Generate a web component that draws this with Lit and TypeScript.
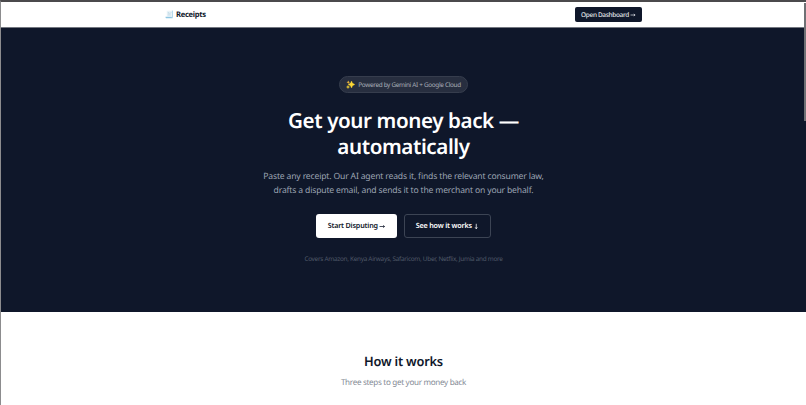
import { LitElement, css, html, svg } from 'lit';
import { customElement } from 'lit/decorators.js';

const receiptIcon = svg`
  <svg class="receipt" viewBox="0 0 18 18">
    <path d="M3.500 1l1.500 1 1.500-1L8 2l1.500-1L11 2l1.500-1L14 2l2-1v12H3.500z" fill="#e9f3f8" />
    <path d="M14 1.500l2-.5v13.500a2 2 0 0 1-2 2z" fill="#b5d9eb" />
    <path d="M1 13.500h12.500c0 1.500.5 2.500 1.500 3H3c-1.200 0-2-1-2-3z" fill="#8fc6e2" />
    <path d="M5.500 5h3M5.500 7.500h6M5.500 10h6M11 5h2" stroke="#aacbdc" stroke-width="1" />
  </svg>
`;

const sparklesIcon = svg`
  <svg class="sparkles" viewBox="0 0 18 18">
    <path d="M11 2q.8 6 6.500 7-5.700 1-6.500 7-.8-6-6.500-7 5.700-1 6.500-7z" fill="#fdd835" stroke="#fdd835" stroke-width=".8" />
    <path d="M4.500 1q.4 3 3.500 3.500-3.100.5-3.500 3.500-.4-3-3.500-3.500 3.100-.5 3.500-3.500z" fill="#f6b93a" />
    <path d="M4 11q.4 2.600 3 3-2.600.4-3 3-.4-2.600-3-3 2.600-.4 3-3z" fill="#fdd835" stroke="#fdd835" stroke-width=".8" />
  </svg>
`;

const arrowRight = svg`
  <svg class="arrow" viewBox="0 0 12 12">
    <path d="M1 6h9M7.500 4L10.300 6 7.500 8" fill="none" stroke="currentColor" stroke-width="1.400" />
  </svg>
`;

const arrowDown = svg`
  <svg class="arrow" viewBox="0 0 12 12">
    <path d="M6 1v9M4 7.500L6 10.300 8 7.500" fill="none" stroke="currentColor" stroke-width="1.400" />
  </svg>
`;

@customElement('receipts-nav')
export class ReceiptsNav extends LitElement {
  static styles = css`
    :host {
      display: block;
      height: 25px;
      background: #fff;
      border-bottom: 1px solid #737780;
      border-top-left-radius: 3px;
    }

    .inner {
      display: flex;
      align-items: center;
      justify-content: space-between;
      width: 477px;
      height: 25px;
      margin-left: 164px;
    }

    .brand {
      display: flex;
      align-items: center;
      gap: 2px;
      color: #0f172a;
      font-size: 7.6px;
      font-weight: 700;
      letter-spacing: -0.3px;
    }

    .receipt {
      width: 9px;
      height: 9px;
    }

    .dashboard {
      display: flex;
      align-items: center;
      justify-content: center;
      gap: 1px;
      box-sizing: border-box;
      width: 67px;
      height: 15px;
      border-radius: 2px;
      background: #0f172a;
      color: #e4e7ec;
      font-size: 6.5px;
      font-weight: 500;
      letter-spacing: -0.35px;
      white-space: nowrap;
    }

    .arrow {
      width: 6px;
      height: 6px;
    }
  `;

  render() {
    return html`
      <div class="inner">
        <div class="brand">${receiptIcon}<span>Receipts</span></div>
        <div class="dashboard"><span>Open Dashboard</span>${arrowRight}</div>
      </div>
    `;
  }
}

@customElement('receipts-hero')
export class ReceiptsHero extends LitElement {
  static styles = css`
    :host {
      display: flex;
      flex-direction: column;
      align-items: center;
      box-sizing: border-box;
      height: 284px;
      padding-top: 48px;
      background: #0f172a;
      white-space: nowrap;
    }

    .badge {
      display: flex;
      align-items: center;
      justify-content: center;
      gap: 3px;
      box-sizing: border-box;
      width: 129px;
      height: 17px;
      border: 1px solid #363d4d;
      border-radius: 9px;
      background: #272e3f;
      color: #a9aeb8;
      font-size: 6.4px;
      letter-spacing: -0.32px;
    }

    .sparkles {
      width: 9px;
      height: 9px;
    }

    .title {
      display: flex;
      flex-direction: column;
      align-items: center;
      margin: 15px 0 0;
      color: #fff;
      font-size: 20.6px;
      font-weight: 600;
      letter-spacing: -0.4px;
      line-height: 26px;
    }

    .lead {
      margin: 9px 0 0;
      color: #9ca4b2;
      font-size: 8.6px;
      letter-spacing: -0.17px;
      line-height: 14px;
      text-align: center;
    }

    .actions {
      display: flex;
      gap: 7px;
      margin-top: 17px;
    }

    .button {
      display: flex;
      align-items: center;
      justify-content: center;
      gap: 1px;
      box-sizing: border-box;
      width: 81px;
      height: 24px;
      border-radius: 3px;
      background: #fff;
      color: #0f172a;
      font-size: 7.2px;
      font-weight: 600;
      letter-spacing: -0.18px;
    }

    .button.outline {
      width: 87px;
      border: 1px solid #3c4454;
      background: transparent;
      color: #fff;
    }

    .arrow {
      width: 6.5px;
      height: 7px;
    }

    .covers {
      margin: 16px 0 0;
      color: #505969;
      font-size: 6.4px;
      letter-spacing: -0.28px;
      line-height: 10px;
    }
  `;

  render() {
    return html`
      <div class="badge">${sparklesIcon}<span>Powered by Gemini AI + Google Cloud</span></div>
      <h1 class="title"><span>Get your money back —</span><span>automatically</span></h1>
      <p class="lead">
        Paste any receipt. Our AI agent reads it, finds the relevant consumer law,<br />
        drafts a dispute email, and sends it to the merchant on your behalf.
      </p>
      <div class="actions">
        <div class="button"><span>Start Disputing</span>${arrowRight}</div>
        <div class="button outline"><span>See how it works</span>${arrowDown}</div>
      </div>
      <p class="covers">Covers Amazon, Kenya Airways, Safaricom, Uber, Netflix, Jumia and more</p>
    `;
  }
}

@customElement('receipts-steps')
export class ReceiptsSteps extends LitElement {
  static styles = css`
    :host {
      display: block;
      padding-top: 40px;
      text-align: center;
    }

    .heading {
      margin: 0;
      color: #0f172a;
      font-size: 12.8px;
      font-weight: 600;
      letter-spacing: -0.2px;
      line-height: 18px;
    }

    .subtitle {
      margin: 7px 0 0;
      color: #858b96;
      font-size: 8.1px;
      letter-spacing: -0.32px;
      line-height: 12px;
    }
  `;

  render() {
    return html`
      <h2 class="heading">How it works</h2>
      <p class="subtitle">Three steps to get your money back</p>
    `;
  }
}

@customElement('app-root')
export class AppRoot extends LitElement {
  static styles = css`
    :host {
      display: block;
      position: relative;
      box-sizing: border-box;
      width: 806px;
      height: 405px;
      overflow: hidden;
      border-top: 2px solid #4b4a4c;
      border-left: 1px solid #8c8c8e;
      background: #fff;
      font-family: 'Noto Sans', 'Open Sans', sans-serif;
      text-rendering: geometricPrecision;
    }

    .scrollbar {
      position: absolute;
      top: 1px;
      right: 0;
      width: 2px;
      height: 118px;
      background: #6f7175;
    }
  `;

  render() {
    return html`
      <receipts-nav></receipts-nav>
      <receipts-hero></receipts-hero>
      <receipts-steps></receipts-steps>
      <div class="scrollbar"></div>
    `;
  }
}
